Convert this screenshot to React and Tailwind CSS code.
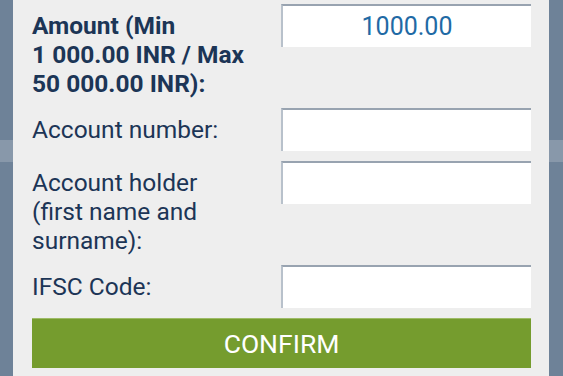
export default function App() {
  const rows = [
    { label: 'Amount (Min 1\u00a0000.00\u00a0INR / Max 50\u00a0000.00\u00a0INR):', bold: true, value: '1000.00' },
    { label: 'Account number:', value: '' },
    { label: 'Account holder (first name and surname):', value: '' },
    { label: 'IFSC Code:', value: '' },
  ];

  return (
    <div className="w-[563px] h-[376px] overflow-hidden flex bg-[#6e8298] font-['Roboto',sans-serif]">
      <div className="w-[13px] flex flex-col">
        <div className="h-[140px]" />
        <div className="h-[22px] bg-[#8898aa]" />
      </div>
      <div className="w-[536px] bg-[#eeeeee] pl-[19px] pr-[18px] pt-[4px]">
        {rows.map((row, i) => (
          <div key={i} className="flex items-start mb-[10px]">
            <div
              className={`w-[249px] pt-[7px] pr-[30px] text-[24.5px] leading-[29px] text-[#1c3556] ${row.bold ? 'font-bold' : ''}`}
            >
              {row.label}
            </div>
            <input
              readOnly
              value={row.value}
              className="w-[250px] h-[43px] bg-white border-t-2 border-l-2 border-t-[#98a3b0] border-l-[#b8c1cb] text-center text-[25px] text-[#1f6aa5] outline-none"
            />
          </div>
        ))}
        <button className="w-[499px] h-[50px] bg-[#759c2e] border-t border-[#9dbb66] text-white text-[26.5px]">
          CONFIRM
        </button>
      </div>
      <div className="flex-1 flex flex-col">
        <div className="h-[140px]" />
        <div className="h-[22px] bg-[#8898aa]" />
      </div>
    </div>
  );
}
